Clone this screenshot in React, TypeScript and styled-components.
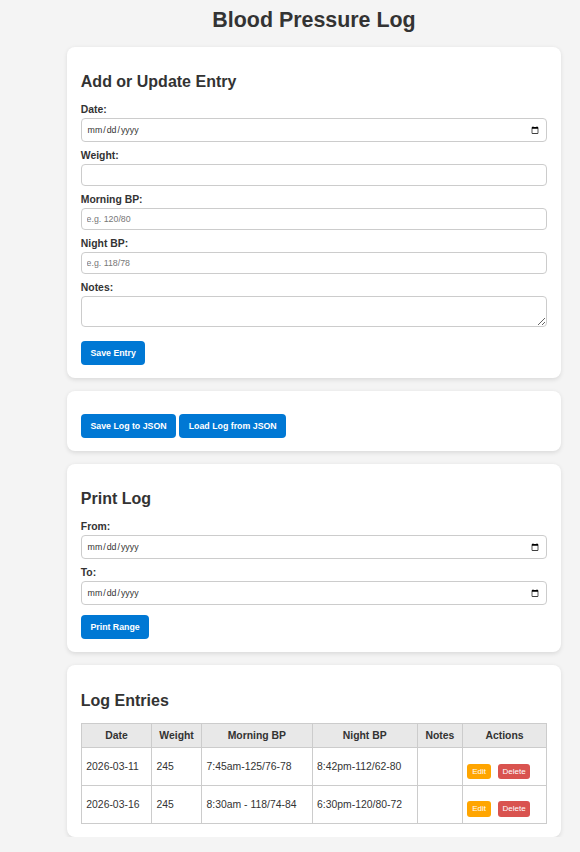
import React from "react";
import styled, { createGlobalStyle } from "styled-components";

const GlobalStyle = createGlobalStyle`
  html, body { margin: 0; padding: 0; background: #f4f4f4; }
  body {
    font-family: "Liberation Sans", Arial, sans-serif;
    color: #333;
  }
  * { box-sizing: border-box; }
`;

const Page = styled.div`
  width: 493.4px;
  margin-left: 67.3px;
  padding-top: 7.5px;
`;

const Title = styled.h1`
  margin: 0 0 14px;
  font-size: 21.4px;
  font-weight: bold;
  text-align: center;
  color: #333;
`;

const Card = styled.section`
  background: #fff;
  border-radius: 8px;
  box-shadow: 0 1.5px 4px rgba(0, 0, 0, 0.1);
  padding: 13px 13.5px;
  margin-bottom: 13px;
  font-size: 10.4px;
  &:last-child { margin-bottom: 0; }
`;

const CardTitle = styled.h2`
  margin: 13.3px 0;
  font-size: 16px;
  font-weight: bold;
  color: #333;
`;

const Label = styled.label`
  display: block;
  margin: 8px 0 3px;
  font-size: 10.4px;
  font-weight: bold;
  color: #333;
`;

const Input = styled.input`
  display: block;
  width: 100%;
  margin: 0;
  padding: 5px 4.8px;
  font-family: "Liberation Sans", Arial, sans-serif;
  font-size: 8.8px;
  color: #333;
  border: 1px solid #ccc;
  border-radius: 4px;
  background: #fff;
  &::placeholder { color: #777; }
  &[type="date"] { padding: 4.6px 4.8px; }
`;

const TextArea = styled.textarea`
  display: block;
  width: 100%;
  margin: 0 0 3.5px;
  padding: 4.8px;
  font-family: "Liberation Sans", Arial, sans-serif;
  font-size: 8.8px;
  line-height: 10px;
  height: 31px;
  border: 1px solid #ccc;
  border-radius: 4px;
`;

const colors = { primary: "#0078d4", edit: "#ffa500", delete: "#d9534f" } as const;

const Button = styled.button<{ $variant?: keyof typeof colors; $small?: boolean }>`
  display: inline-block;
  margin-top: ${(p) => (p.$small ? "9.6px" : "10px")};
  margin-right: ${(p) => (p.$small ? "4px" : "0")};
  padding: ${(p) => (p.$small ? "3px 4.8px" : "7px 9.6px")};
  font-family: "Liberation Sans", Arial, sans-serif;
  font-size: ${(p) => (p.$small ? "8px" : "8.8px")};
  font-weight: ${(p) => (p.$small ? "normal" : "bold")};
  line-height: 1.15;
  color: #fff;
  background: ${(p) => colors[p.$variant ?? "primary"]};
  border: none;
  border-radius: ${(p) => (p.$small ? "3px" : "4px")};
  cursor: pointer;
`;

const Table = styled.table`
  width: 100%;
  border-collapse: collapse;
  table-layout: fixed;
  font-size: 10.4px;
  color: #333;
`;

const Th = styled.th`
  border: 1px solid #ccc;
  background: #e8e8e8;
  padding: 6px 5.6px;
  font-weight: bold;
  text-align: center;
`;

const Td = styled.td`
  border: 1px solid #ccc;
  padding: 6px 4.5px;
  text-align: left;
  vertical-align: middle;
`;

type Entry = { date: string; weight: string; morning: string; night: string; notes: string };

const entries: Entry[] = [
  { date: "2026-03-11", weight: "245", morning: "7:45am-125/76-78", night: "8:42pm-112/62-80", notes: "" },
  { date: "2026-03-16", weight: "245", morning: "8:30am - 118/74-84", night: "6:30pm-120/80-72", notes: "" },
];

const colWidths = ["15.1%", "10.75%", "23.75%", "22.6%", "9.7%", "18.1%"];

export default function App() {
  return (
    <>
      <GlobalStyle />
      <Page>
        <Title>Blood Pressure Log</Title>

        <Card>
          <CardTitle>Add or Update Entry</CardTitle>
          <Label>Date:</Label>
          <Input type="date" />
          <Label>Weight:</Label>
          <Input type="text" />
          <Label>Morning BP:</Label>
          <Input type="text" placeholder="e.g. 120/80" />
          <Label>Night BP:</Label>
          <Input type="text" placeholder="e.g. 118/78" />
          <Label>Notes:</Label>
          <TextArea rows={2} />
          <Button>Save Entry</Button>
        </Card>

        <Card>
          <Button>Save Log to JSON</Button> <Button>Load Log from JSON</Button>
        </Card>

        <Card>
          <CardTitle>Print Log</CardTitle>
          <Label>From:</Label>
          <Input type="date" />
          <Label>To:</Label>
          <Input type="date" />
          <Button>Print Range</Button>
        </Card>

        <Card>
          <CardTitle>Log Entries</CardTitle>
          <Table>
            <colgroup>
              {colWidths.map((w, i) => (
                <col key={i} style={{ width: w }} />
              ))}
            </colgroup>
            <thead>
              <tr>
                <Th>Date</Th>
                <Th>Weight</Th>
                <Th>Morning BP</Th>
                <Th>Night BP</Th>
                <Th>Notes</Th>
                <Th>Actions</Th>
              </tr>
            </thead>
            <tbody>
              {entries.map((e) => (
                <tr key={e.date}>
                  <Td>{e.date}</Td>
                  <Td>{e.weight}</Td>
                  <Td>{e.morning}</Td>
                  <Td>{e.night}</Td>
                  <Td>{e.notes}</Td>
                  <Td>
                    <Button $small $variant="edit">Edit</Button>{" "}
                    <Button $small $variant="delete">Delete</Button>
                  </Td>
                </tr>
              ))}
            </tbody>
          </Table>
        </Card>
      </Page>
    </>
  );
}
